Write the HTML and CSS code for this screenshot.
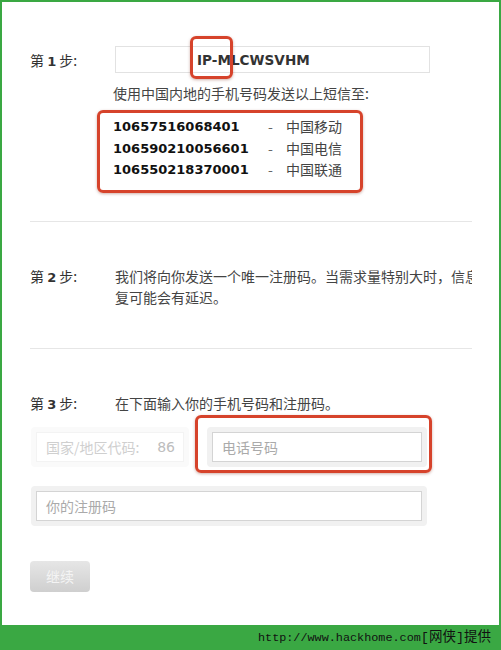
FILE: index.html
```html
<!DOCTYPE html>
<html lang="zh-CN">
<head>
    <meta charset="utf-8">
    <title>短信注册</title>
    <link rel="stylesheet" href="styles.css">
</head>
<body>

<div id="frame">
    <div id="content">

        <div class="step step-one">
            <span class="step-label">第 <b>1</b> 步:</span>
            <div class="step-body">
                <div class="code-box">IP-MLCWSVHM</div>
                <p class="hint">使用中国内地的手机号码发送以上短信至:</p>
                <ul class="numbers">
                    <li><span class="num">10657516068401</span><span class="dash">-</span>中国移动</li>
                    <li><span class="num">106590210056601</span><span class="dash">-</span>中国电信</li>
                    <li><span class="num">106550218370001</span><span class="dash">-</span>中国联通</li>
                </ul>
            </div>
        </div>

        <hr class="sep">

        <div class="step step-two">
            <span class="step-label">第 <b>2</b> 步:</span>
            <p class="step-body text">我们将向你发送一个唯一注册码。当需求量特别大时，信息回<br>复可能会有延迟。</p>
        </div>

        <hr class="sep">

        <div class="step step-three">
            <span class="step-label">第 <b>3</b> 步:</span>
            <p class="step-body text">在下面输入你的手机号码和注册码。</p>
        </div>

        <div class="field-row">
            <div class="field field-country">
                <div class="input disabled"><span>国家/地区代码:</span><span class="cc">86</span></div>
            </div>
            <div class="field field-phone">
                <div class="input placeholder">电话号码</div>
            </div>
        </div>

        <div class="field-row">
            <div class="field field-wide">
                <div class="input placeholder">你的注册码</div>
            </div>
        </div>

        <button class="btn" disabled>继续</button>
    </div>

    <!-- red marks -->
    <div class="mark mark-ip"></div>
    <div class="mark mark-numbers"></div>
    <div class="mark mark-phone"></div>
</div>

<div id="footer">http://www.hackhome.com<span class="cn">[网侠]提供</span></div>

</body>
</html>
```

FILE: styles.css
```css
html, body {
    margin: 0;
    padding: 0;
    background-color: #fff;
    font-family: "Noto Sans CJK SC", sans-serif;
    font-size: 14px;
    color: #333;
}

#frame {
    position: relative;
    height: 625px;
    box-sizing: border-box;
    border: 2px solid #3aa843;
    border-bottom: 0;
    overflow: hidden;
}

#content {
    width: 442px;
    margin-left: 28px;
    padding-top: 44px;
    overflow: hidden;
}

.step {
    display: flex;
    align-items: flex-start;
}

.step-label {
    flex: 0 0 84px;
    font-size: 14px;
    line-height: 21px;
    color: #333;
    white-space: nowrap;
}

.step-label b {
    font-family: "DejaVu Sans", sans-serif;
    font-size: 13px;
}

.step-one .step-label {
    padding-top: 4px;
}

.step-body {
    flex: 0 0 auto;
}

.code-box {
    width: 315px;
    height: 27px;
    margin-left: 1px;
    padding-left: 81px;
    border: 1px solid #e2e2e2;
    box-sizing: border-box;
    font-family: "DejaVu Sans", sans-serif;
    font-weight: bold;
    font-size: 13.6px;
    line-height: 26px;
    color: #333;
}

.hint {
    margin: 10px 0 0 -1px;
    line-height: 21px;
    color: #444;
}

.numbers {
    list-style: none;
    margin: 12px 0 0 -1px;
    padding: 0;
}

.numbers li {
    height: 21.5px;
    line-height: 21.5px;
    color: #444;
    white-space: nowrap;
}

.num, .dash {
    display: inline-block;
    vertical-align: top;
}

.num {
    width: 155px;
    font-family: "DejaVu Sans", sans-serif;
    font-weight: bold;
    font-size: 13px;
    color: #111;
}

.dash {
    width: 18px;
    color: #666;
}

.sep {
    height: 1px;
    margin: 40px 0 0;
    border: 0;
    background-color: #e6e6e6;
}

.step-two, .step-three {
    margin-top: 44px;
}

.text {
    margin: 0;
    line-height: 21px;
    color: #444;
    white-space: nowrap;
    padding-left: 1px;
}

.field-row {
    display: flex;
    gap: 18px;
    margin-top: 12px;
    padding-left: 1px;
}

.field-row + .field-row {
    margin-top: 19px;
}

.field {
    padding: 5px;
    border-radius: 4px;
    background-color: #f1f1f1;
    box-sizing: border-box;
}

.field-country {
    width: 158px;
    background-color: #fafafa;
}

.field-phone {
    width: 220px;
}

.field-wide {
    width: 396px;
}

.input {
    height: 30px;
    box-sizing: border-box;
    border: 1px solid #d4d4d4;
    background-color: #fff;
    padding-left: 9px;
    line-height: 28px;
    font-size: 14px;
    color: #aaa;
}

.input.disabled {
    border-color: #f3f3f3;
    color: #cfcfcf;
    display: flex;
    justify-content: space-between;
    padding-right: 8px;
}

.cc {
    font-family: "DejaVu Sans", sans-serif;
    font-size: 14px;
    color: #bdbdbd;
}

.btn {
    display: block;
    width: 60px;
    height: 31px;
    margin-top: 35px;
    margin-left: 0;
    padding: 0;
    border: 0;
    border-radius: 4px;
    background: linear-gradient(#e6e6e6, #cfcfcf);
    font-family: "Noto Sans CJK SC", sans-serif;
    font-size: 14px;
    color: #f4f4f4;
}

.mark {
    position: absolute;
    border: 3px solid #d6432b;
    border-radius: 6px;
    box-shadow: 0 1px 3px rgba(120, 30, 10, .35);
    box-sizing: border-box;
}

.mark-ip {
    left: 188px;
    top: 34px;
    width: 43px;
    height: 43px;
}

.mark-numbers {
    left: 95px;
    top: 108px;
    width: 266px;
    height: 83px;
}

.mark-phone {
    left: 193px;
    top: 413px;
    width: 237px;
    height: 58px;
}

#footer {
    height: 25px;
    background-color: #3aa843;
    text-align: right;
    padding-right: 10px;
    font-family: "Liberation Mono", "Noto Sans CJK SC", monospace;
    font-size: 11.8px;
    line-height: 25px;
    color: #111;
}

#footer .cn {
    font-size: 13.5px;
}
```
